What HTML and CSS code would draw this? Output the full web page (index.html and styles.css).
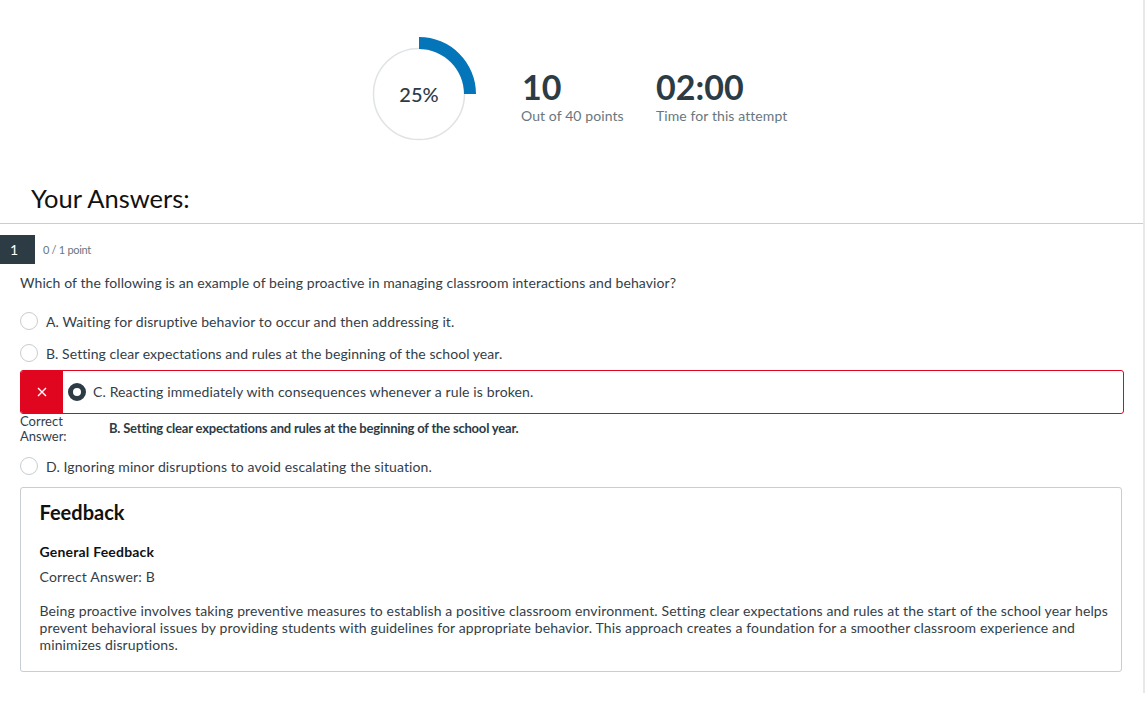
FILE: index.html
```html
<!DOCTYPE html>
<html lang="en">
<head>
<meta charset="utf-8">
<title>Your Answers</title>
<link rel="stylesheet" href="styles.css">
</head>
<body>
<main class="page">
  <section class="summary">
    <div class="ring">
      <svg class="ring-svg" width="120" height="120" viewBox="0 0 120 120" aria-hidden="true">
        <circle cx="60" cy="60" r="45.5" fill="none" stroke="#dfe3e6" stroke-width="1.5"/>
        <path d="M60 3 A57 57 0 0 1 117 60 H105 A45 45 0 0 0 60 15 Z" fill="#0475b8"/>
      </svg>
      <span class="ring-label">25%</span>
    </div>
    <div class="stat stat-score">
      <div class="stat-value">10</div>
      <div class="stat-label">Out of 40 points</div>
    </div>
    <div class="stat">
      <div class="stat-value">02:00</div>
      <div class="stat-label">Time for this attempt</div>
    </div>
  </section>

  <h1 class="title">Your Answers:</h1>

  <section class="question">
    <div class="q-head">
      <span class="q-num">1</span>
      <span class="q-points">0 / 1 point</span>
    </div>
    <p class="q-text">Which of the following is an example of being proactive in managing classroom interactions and behavior?</p>

    <div class="answer answer-a"><span class="radio"></span>A. Waiting for disruptive behavior to occur and then addressing it.</div>
    <div class="answer answer-b"><span class="radio"></span>B. Setting clear expectations and rules at the beginning of the school year.</div>

    <div class="wrong">
      <span class="wrong-flag">
        <svg width="10" height="10" viewBox="0 0 10 10" aria-hidden="true"><path d="M1 1 L9 9 M9 1 L1 9" stroke="#fff" stroke-width="1.4" fill="none"/></svg>
      </span>
      <span class="radio-on"></span>
      <span class="wrong-text">C. Reacting immediately with consequences whenever a rule is broken.</span>
    </div>
    <div class="correct">
      <span class="correct-label">Correct Answer:</span>
      <span class="correct-text">B. Setting clear expectations and rules at the beginning of the school year.</span>
    </div>

    <div class="answer answer-d"><span class="radio"></span>D. Ignoring minor disruptions to avoid escalating the situation.</div>

    <div class="feedback">
      <h2 class="fb-title">Feedback</h2>
      <h3 class="fb-sub">General Feedback</h3>
      <p class="fb-key">Correct Answer: B</p>
      <p class="fb-body">Being proactive involves taking preventive measures to establish a positive classroom environment. Setting clear expectations and rules at the start of the school year helps prevent behavioral issues by providing students with guidelines for appropriate behavior. This approach creates a foundation for a smoother classroom experience and minimizes disruptions.</p>
    </div>
  </section>
</main>
</body>
</html>
```

FILE: styles.css
```css
* { box-sizing: border-box; }
html, body { margin: 0; padding: 0; background: #fff; }
body { font-family: Lato, "Open Sans", sans-serif; color: #333e48; font-size: 14px; overflow: hidden; }

.page {
  width: 1145px;
  height: 693px;
  border-right: 2px solid #e8e8e8;
  padding-top: 34px;
}

.summary { display: flex; align-items: center; height: 120px; padding-left: 359px; }
.ring { position: relative; width: 120px; height: 120px; }
.ring-svg { display: block; }
.ring-label {
  position: absolute; left: 0; right: 0; top: 48px;
  text-align: center; font-size: 20px; line-height: 24px; font-weight: 500; color: #2d3b45;
}
.stat { padding-top: 3px; }
.stat-score { margin-left: 42px; width: 135px; }
.stat-score .stat-value { padding-left: 1px; }
.stat-value { font-size: 34px; line-height: 40px; font-weight: 700; color: #2d3b45; }
.stat-label { font-size: 14px; line-height: 18px; letter-spacing: .09px; color: #68777d; }

.title {
  margin: 0; height: 70px; padding: 27px 0 0 31px;
  font-size: 25.5px; line-height: 34px; font-weight: 400; color: #111;
  border-bottom: 1px solid #c7cdd1;
}

.question { padding-top: 11px; }
.q-head { display: flex; align-items: center; height: 29px; }
.q-num {
  width: 35px; height: 29px; background: #2d3b45; color: #fff;
  font-size: 14px; line-height: 29px; padding-left: 10px;
}
.q-points { margin-left: 8px; font-size: 11px; letter-spacing: -.3px; color: #68777d; }
.q-text { margin: 10px 0 0 20px; font-size: 14px; line-height: 18px; letter-spacing: .08px; color: #333e48; height: 18px; }

.answer { display: flex; align-items: center; margin-left: 20px; height: 22px; font-size: 14px; letter-spacing: .1px; color: #333e48; }
.answer-a { margin-top: 18px; }
.answer-b { margin-top: 10px; letter-spacing: .06px; }
.radio {
  width: 18px; height: 18px; margin-right: 8px; border-radius: 50%;
  border: 1px solid #c7cdd1; background: #fff; flex: none;
}

.wrong {
  display: flex; align-items: center; margin: 6px 19px 0 20px; height: 44px;
  border: 1px solid #e0061f; border-radius: 3px; overflow: hidden; font-size: 14px; letter-spacing: .13px;
}
.wrong-text { margin-bottom: 2px; }
.wrong-flag {
  display: flex; align-items: center; justify-content: center;
  width: 43px; height: 100%; background: #e0061f; flex: none; margin-left: -1px;
}
.radio-on {
  width: 18px; height: 18px; border-radius: 50%; border: 5.5px solid #2d3b45;
  margin: 0 7px 0 5px; background: #fff; flex: none;
}

.correct { display: flex; margin-left: 20px; height: 30px; }
.correct-label { width: 89px; padding: 0 30px 0 0; font-size: 13px; line-height: 15px; color: #333e48; }
.correct-text { font-size: 13px; font-weight: 700; line-height: 15px; padding-top: 7px; letter-spacing: -.2px; color: #2d3b45; }
.answer-d { margin-top: 11px; }

.feedback {
  margin: 10px 21px 0 20px; height: 185px; padding: 12px 12px 0 18.5px;
  border: 1px solid #c7cdd1; border-radius: 3px;
}
.fb-title { margin: 0; font-size: 20px; line-height: 24px; font-weight: 700; color: #111; }
.fb-sub { margin: 19px 0 0; font-size: 14px; line-height: 17px; letter-spacing: .2px; font-weight: 700; color: #111; }
.fb-key { margin: 8px 0 0; font-size: 14px; line-height: 17px; letter-spacing: .2px; color: #333e48; }
.fb-body { margin: 17px 0 0; font-size: 14px; line-height: 17px; letter-spacing: .13px; color: #333e48; }
```
